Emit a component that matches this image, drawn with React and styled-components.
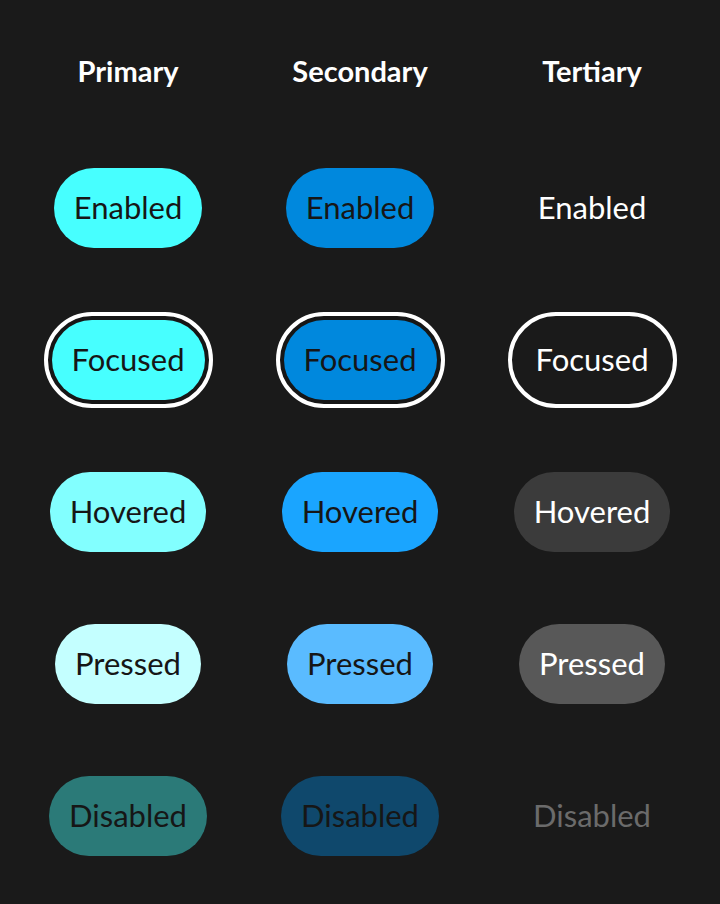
import React from "react";
import styled, { createGlobalStyle, css } from "styled-components";

const GlobalStyle = createGlobalStyle`
  html, body {
    margin: 0;
    padding: 0;
    background: #1a1a1a;
  }
  body {
    font-family: "Lato", "Noto Sans", sans-serif;
  }
`;

const palette = {
  primary: {
    enabled: "#47ffff",
    focused: "#47ffff",
    hovered: "#82ffff",
    pressed: "#c4ffff",
    disabled: "#2b7a78",
  },
  secondary: {
    enabled: "#0088dd",
    focused: "#0088dd",
    hovered: "#1aa5ff",
    pressed: "#5abbff",
    disabled: "#0f486c",
  },
  tertiary: {
    enabled: "transparent",
    focused: "transparent",
    hovered: "#3b3b3b",
    pressed: "#585858",
    disabled: "transparent",
  },
};

const Page = styled.div`
  width: 720px;
  min-height: 904px;
  box-sizing: border-box;
  padding: 48px 12px 0;
  background: #1a1a1a;
`;

const Columns = styled.div`
  display: grid;
  grid-template-columns: repeat(3, 1fr);
`;

const Headings = styled(Columns)`
  height: 48px;
  margin-bottom: 36px;
`;

const Heading = styled.h2`
  margin: 0;
  padding-bottom: 4px;
  display: flex;
  align-items: center;
  justify-content: center;
  font-size: 29px;
  font-weight: 700;
  color: #ffffff;
`;

const Row = styled(Columns)`
  height: 152px;
`;

const Cell = styled.div`
  display: flex;
  align-items: center;
  justify-content: center;
`;

const Button = styled.button`
  height: 80px;
  padding: 0 20px 3px;
  border: none;
  border-radius: 40px;
  font-family: inherit;
  font-size: 31px;
  cursor: pointer;
  background: ${({ $kind, $state }) => palette[$kind][$state]};
  color: ${({ $kind, $state }) =>
    $kind === "tertiary"
      ? $state === "disabled"
        ? "#6b6b6b"
        : "#ffffff"
      : "#161616"};
  ${({ $state }) =>
    $state === "focused" &&
    css`
      outline: 4px solid #ffffff;
      outline-offset: 4px;
    `}
  ${({ $state, $kind }) =>
    $state === "focused" &&
    $kind !== "tertiary" &&
    css`
      box-shadow: 0 0 0 4px #161616;
    `}
`;

const kinds = ["primary", "secondary", "tertiary"];
const states = ["enabled", "focused", "hovered", "pressed", "disabled"];
const label = (s) => s[0].toUpperCase() + s.slice(1);

export default function App() {
  return (
    <>
      <GlobalStyle />
      <Page>
        <Headings>
          {kinds.map((k) => (
            <Heading key={k}>{label(k)}</Heading>
          ))}
        </Headings>
        {states.map((s) => (
          <Row key={s}>
            {kinds.map((k) => (
              <Cell key={k}>
                <Button $kind={k} $state={s} disabled={s === "disabled"}>
                  {label(s)}
                </Button>
              </Cell>
            ))}
          </Row>
        ))}
      </Page>
    </>
  );
}
